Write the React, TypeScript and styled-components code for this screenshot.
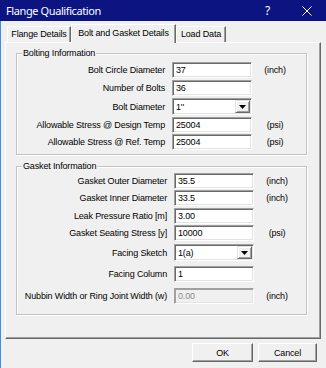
import * as React from "react";
import styled, { createGlobalStyle } from "styled-components";

const GlobalStyle = createGlobalStyle`
  html, body {
    margin: 0;
    padding: 0;
    background: #f0f0f0;
  }
  body {
    width: 326px;
    height: 368px;
    overflow: hidden;
    font-family: "Liberation Sans", Arial, sans-serif;
    font-size: 9px;
    letter-spacing: -0.15px;
    color: #000;
  }
`;

const Window = styled.div`
  display: flex;
  flex-direction: column;
  width: 326px;
  height: 368px;
`;

const TitleBar = styled.div`
  display: flex;
  align-items: center;
  height: 21px;
  flex-shrink: 0;
  background: #0c1482;
  color: #fff;
`;

const Caption = styled.div`
  flex: 1;
  padding-left: 6px;
  font-family: "Noto Sans", "Liberation Sans", sans-serif;
  font-size: 11px;
  letter-spacing: -0.4px;
  line-height: 21px;
`;

const CaptionButton = styled.div`
  width: 39px;
  height: 21px;
  display: flex;
  align-items: center;
  justify-content: center;
  font-family: "Noto Sans", "Liberation Sans", sans-serif;
  font-size: 12px;
  letter-spacing: 0;
`;

const Client = styled.div`
  flex: 1;
  display: flex;
  flex-direction: column;
  border-left: 1px solid #3c8de6;
  padding: 0 5px 0 4px;
`;

const TabStrip = styled.div`
  display: flex;
  align-items: flex-end;
  height: 21px;
  padding-left: 2px;
  position: relative;
  z-index: 1;
`;

const Tab = styled.div<{ $active?: boolean; $w: number }>`
  box-sizing: border-box;
  width: ${(p) => p.$w}px;
  height: ${(p) => (p.$active ? 19 : 16)}px;
  margin-bottom: ${(p) => (p.$active ? -1 : 0)}px;
  padding-bottom: ${(p) => (p.$active ? 3 : 1)}px;
  display: flex;
  align-items: center;
  justify-content: center;
  white-space: nowrap;
  background: #f0f0f0;
  border-top: 1px solid #fff;
  border-left: 1px solid #fff;
  border-right: 1px solid #696969;
  box-shadow: inset -1px 0 0 #a0a0a0;
`;

const Panel = styled.div`
  box-sizing: border-box;
  height: 297px;
  padding: 0 13px 0 10px;
  border-top: 1px solid #fff;
  border-left: 1px solid #fff;
  border-right: 1px solid #696969;
  border-bottom: 1px solid #696969;
  box-shadow: inset -1px -1px 0 #a0a0a0;
`;

const Group = styled.fieldset<{ $mt: number; $pb: number }>`
  margin: ${(p) => p.$mt}px 0 0 0;
  padding: 0 0 ${(p) => p.$pb}px 0;
  min-width: 0;
  border: 1px solid #c4c4c4;
  box-shadow: inset 1px 1px 0 #fff, 1px 1px 0 #fff;
`;

const Legend = styled.legend`
  margin-left: 5px;
  padding: 0 1px;
  line-height: 10px;
  background: #f0f0f0;
`;

const Row = styled.div<{ $mt: number; $h?: number; $indent?: number }>`
  display: grid;
  grid-template-columns: 148px 80px 32px;
  column-gap: 7px;
  align-items: center;
  height: ${(p) => p.$h ?? 16}px;
  margin-top: ${(p) => p.$mt}px;
  margin-left: ${(p) => p.$indent ?? 0}px;
`;

const Label = styled.span`
  text-align: right;
  white-space: nowrap;
`;

const Unit = styled.span`
  text-align: center;
  white-space: nowrap;
`;

const TextBox = styled.input`
  box-sizing: border-box;
  width: 80px;
  height: 16px;
  margin: 0;
  padding: 0 0 0 3px;
  font: inherit;
  letter-spacing: inherit;
  color: #000;
  background: #fff;
  border-style: solid;
  border-width: 1px;
  border-color: #a0a0a0 #fff #fff #a0a0a0;
  box-shadow: inset 1px 1px 0 #696969, inset -1px -1px 0 #e3e3e3;
  outline: none;

  &:disabled {
    background: #f0f0f0;
    color: #8a8a8a;
    box-shadow: inset 1px 1px 0 #a0a0a0, inset -1px -1px 0 #e3e3e3;
  }
`;

const Combo = styled.div`
  box-sizing: border-box;
  width: 80px;
  height: 17px;
  padding: 1px 1px 1px 3px;
  display: flex;
  align-items: center;
  background: #fff;
  border-style: solid;
  border-width: 1px;
  border-color: #a0a0a0 #fff #fff #a0a0a0;
  box-shadow: inset 1px 1px 0 #696969, inset -1px -1px 0 #e3e3e3;
`;

const ComboText = styled.span`
  flex: 1;
`;

const DropButton = styled.span`
  box-sizing: border-box;
  width: 15px;
  height: 13px;
  display: flex;
  align-items: center;
  justify-content: center;
  background: #f0f0f0;
  border: 1px solid;
  border-color: #e3e3e3 #696969 #696969 #e3e3e3;
  box-shadow: inset 1px 1px 0 #fff, inset -1px -1px 0 #a0a0a0;
`;

const ButtonRow = styled.div`
  display: flex;
  justify-content: flex-end;
  gap: 5px;
  margin-top: 4px;
  padding-right: 4px;
`;

const PushButton = styled.button<{ $w: number }>`
  box-sizing: border-box;
  width: ${(p) => p.$w}px;
  height: 19px;
  padding: 0;
  font: inherit;
  letter-spacing: inherit;
  color: #000;
  background: #f0f0f0;
  border: 1px solid;
  border-color: #fff #696969 #696969 #fff;
  box-shadow: inset -1px -1px 0 #a0a0a0;
`;

type Field = {
  label: string;
  value: string;
  unit?: string;
  mt: number;
  combo?: boolean;
  disabled?: boolean;
};

const bolting: Field[] = [
  { label: "Bolt Circle Diameter", value: "37", unit: "(inch)", mt: 4 },
  { label: "Number of Bolts", value: "36", mt: 2 },
  { label: "Bolt Diameter", value: "1''", mt: 2, combo: true },
  { label: "Allowable Stress @ Design Temp", value: "25004", unit: "(psi)", mt: 2 },
  { label: "Allowable Stress @ Ref. Temp", value: "25004", unit: "(psi)", mt: 1 },
];

const gasket: Field[] = [
  { label: "Gasket Outer Diameter", value: "35.5", unit: "(inch)", mt: 2 },
  { label: "Gasket Inner Diameter", value: "33.5", unit: "(inch)", mt: 1 },
  { label: "Leak Pressure Ratio [m]", value: "3.00", mt: 2 },
  { label: "Gasket Seating Stress [y]", value: "10000", unit: "(psi)", mt: 1 },
  { label: "Facing Sketch", value: "1(a)", mt: 3, combo: true },
  { label: "Facing Column", value: "1", mt: 5 },
  { label: "Nubbin Width or Ring Joint Width (w)", value: "0.00", unit: "(inch)", mt: 6, disabled: true },
];

const DownArrow = () => (
  <svg width="7" height="4" viewBox="0 0 7 4">
    <path d="M0 0h7L3.5 4z" fill="#000" />
  </svg>
);

const CloseIcon = () => (
  <svg width="10" height="10" viewBox="0 0 10 10">
    <path d="M0.5 0.5l9 9M9.5 0.5l-9 9" stroke="#fff" strokeWidth="1" fill="none" />
  </svg>
);

function FieldRow({ f, indent }: { f: Field; indent?: number }) {
  return (
    <Row $mt={f.mt} $h={f.combo ? 17 : 16} $indent={indent}>
      <Label>{f.label}</Label>
      {f.combo ? (
        <Combo>
          <ComboText>{f.value}</ComboText>
          <DropButton>
            <DownArrow />
          </DropButton>
        </Combo>
      ) : (
        <TextBox defaultValue={f.value} disabled={f.disabled} readOnly />
      )}
      <Unit>{f.unit ?? ""}</Unit>
    </Row>
  );
}

export default function App() {
  return (
    <Window>
      <GlobalStyle />
      <TitleBar>
        <Caption>Flange Qualification</Caption>
        <CaptionButton>?</CaptionButton>
        <CaptionButton>
          <CloseIcon />
        </CaptionButton>
      </TitleBar>
      <Client>
        <TabStrip>
          <Tab $w={64}>Flange Details</Tab>
          <Tab $w={105} $active>
            Bolt and Gasket Details
          </Tab>
          <Tab $w={50}>Load Data</Tab>
        </TabStrip>
        <Panel>
          <Group $mt={5} $pb={4}>
            <Legend>Bolting Information</Legend>
            {bolting.map((f) => (
              <FieldRow key={f.label} f={f} />
            ))}
          </Group>
          <Group $mt={6} $pb={10}>
            <Legend>Gasket Information</Legend>
            {gasket.map((f) => (
              <FieldRow key={f.label} f={f} indent={2} />
            ))}
          </Group>
        </Panel>
        <ButtonRow>
          <PushButton $w={61}>OK</PushButton>
          <PushButton $w={59}>Cancel</PushButton>
        </ButtonRow>
      </Client>
    </Window>
  );
}
